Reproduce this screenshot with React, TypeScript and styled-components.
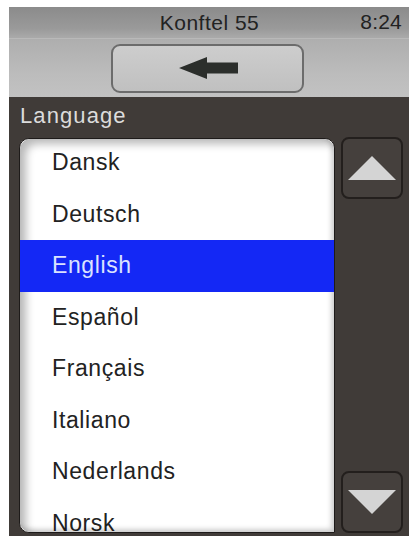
import React from "react";
import styled, { createGlobalStyle } from "styled-components";

const Global = createGlobalStyle`
  html, body { margin: 0; padding: 0; background: #ffffff; }
  body { font-family: "Liberation Sans", Arial, sans-serif; }
`;

const Device = styled.div`
  margin: 7px 0 0 9px;
  width: 400px;
  height: 529px;
  display: flex;
  flex-direction: column;
  overflow: hidden;
`;

const StatusBar = styled.div`
  height: 31px;
  flex: none;
  position: relative;
  display: flex;
  align-items: center;
  justify-content: center;
  background: linear-gradient(#8b8b8b 0%, #9a9a9a 70%, #aaaaaa 100%);
  border-bottom: 1px solid #b9b9b9;
  color: #222222;
  font-size: 21px;
  letter-spacing: 0.5px;
`;

const Title = styled.span`
  margin-left: 1px;
`;

const Clock = styled.span`
  position: absolute;
  right: 7px;
  top: 3px;
  font-size: 21px;
  letter-spacing: 0.2px;
`;

const Toolbar = styled.div`
  height: 58px;
  flex: none;
  display: flex;
  align-items: center;
  justify-content: center;
  background: linear-gradient(#aeaeae 0%, #bcbcbc 60%, #c2c2c2 100%);
  padding-right: 5px;
`;

const BackButton = styled.div`
  width: 193px;
  height: 49px;
  margin-left: 1px;
  box-sizing: border-box;
  border: 2px solid #6c6c6c;
  border-radius: 9px;
  background: linear-gradient(#cdcdcd, #c0c0c0);
  display: flex;
  align-items: center;
  justify-content: center;
  padding-left: 3px;
`;

const Content = styled.div`
  flex: 1;
  background: #403b38;
  display: flex;
  flex-direction: column;
  padding: 0 5px 0 10px;
  min-height: 0;
`;

const Label = styled.div`
  height: 40px;
  flex: none;
  display: flex;
  align-items: center;
  padding-left: 1px;
  padding-bottom: 2px;
  box-sizing: border-box;
  color: #dcdcdc;
  font-size: 22px;
  letter-spacing: 1.1px;
`;

const Body = styled.div`
  flex: 1;
  display: grid;
  grid-template-columns: 316px 62px;
  column-gap: 6px;
  min-height: 0;
`;

const ListBox = styled.div`
  position: relative;
  background: #ffffff;
  border-radius: 10px 10px 0 10px;
  border: 1px solid #1e1b1a;
  box-sizing: border-box;
  overflow: hidden;
  margin-top: 1px;
  margin-bottom: 3px;
`;

const Shade = styled.div`
  position: absolute;
  inset: 0;
  pointer-events: none;
  border-radius: 10px 10px 0 10px;
  box-shadow: inset 6px 5px 8px rgba(0, 0, 0, 0.28),
    inset -3px -3px 5px rgba(0, 0, 0, 0.18);
`;

const Rows = styled.div`
  margin-top: -2px;
  display: flex;
  flex-direction: column;
`;

const Row = styled.div<{ $selected?: boolean }>`
  height: 51.5px;
  flex: none;
  display: flex;
  align-items: center;
  padding-left: 32px;
  font-size: 23px;
  letter-spacing: 0.6px;
  color: ${(p) => (p.$selected ? "#dbe2ff" : "#222222")};
  background: ${(p) => (p.$selected ? "#1428f5" : "transparent")};
  position: relative;
  z-index: ${(p) => (p.$selected ? 1 : 0)};
`;

const Side = styled.div`
  display: flex;
  flex-direction: column;
  justify-content: space-between;
  padding-bottom: 3px;
`;

const ScrollButton = styled.div`
  width: 62px;
  height: 62px;
  box-sizing: border-box;
  border: 2px solid #231f1d;
  border-radius: 8px;
  background: #45403d;
  display: flex;
  align-items: center;
  justify-content: center;
`;

const languages = [
  "Dansk",
  "Deutsch",
  "English",
  "Español",
  "Français",
  "Italiano",
  "Nederlands",
  "Norsk",
];

export default function App() {
  return (
    <>
      <Global />
      <Device>
        <StatusBar>
          <Title>Konftel 55</Title>
          <Clock>8:24</Clock>
        </StatusBar>
        <Toolbar>
          <BackButton>
            <svg width="60" height="22" viewBox="0 0 60 22">
              <polygon
                points="0,11 28,0 28,5.5 59,5.5 59,16.5 28,16.5 28,22"
                fill="#2b2e2b"
              />
            </svg>
          </BackButton>
        </Toolbar>
        <Content>
          <Label>Language</Label>
          <Body>
            <ListBox>
              <Rows>
                {languages.map((l) => (
                  <Row key={l} $selected={l === "English"}>
                    {l}
                  </Row>
                ))}
              </Rows>
              <Shade />
            </ListBox>
            <Side>
              <ScrollButton>
                <svg width="48" height="24" viewBox="0 0 48 24">
                  <polygon points="24,0 48,24 0,24" fill="#d4d4d4" />
                </svg>
              </ScrollButton>
              <ScrollButton>
                <svg width="48" height="24" viewBox="0 0 48 24">
                  <polygon points="0,0 48,0 24,24" fill="#d4d4d4" />
                </svg>
              </ScrollButton>
            </Side>
          </Body>
        </Content>
      </Device>
    </>
  );
}
